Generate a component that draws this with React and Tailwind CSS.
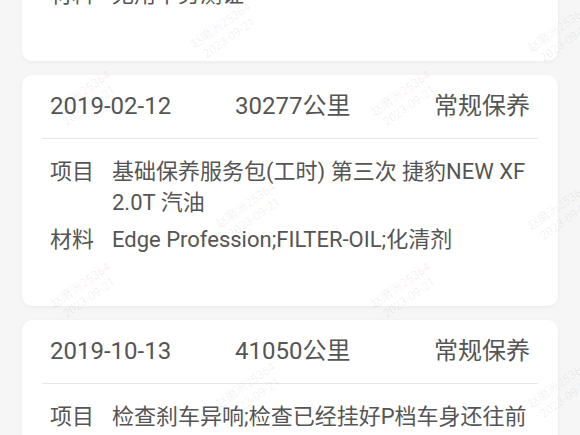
import React from "react";

const marks = [
  { x: 225, y: 32 },
  { x: 562, y: 36 },
  { x: 85, y: 100 },
  { x: 405, y: 100 },
  { x: 250, y: 212 },
  { x: 562, y: 214 },
  { x: 85, y: 292 },
  { x: 405, y: 292 },
  { x: 250, y: 392 },
  { x: 562, y: 392 },
];

function Row({ label, children }) {
  return (
    <div className="flex pl-[8px] text-[22px] leading-[31px]">
      <div className="w-[62px] shrink-0">{label}</div>
      <div className="flex-1 min-w-0">{children}</div>
    </div>
  );
}

function Card({ date, km, type, items }) {
  return (
    <div className="bg-white rounded-[10px] px-[20px] pb-[51px] shadow-[0_1px_4px_rgba(0,0,0,0.05)]">
      <div className="flex items-center px-[8px] pt-[15px] pb-[16px] text-[24px] leading-[32px]">
        <div className="w-[185px] shrink-0">{date}</div>
        <div className="flex-1">{km}</div>
        <div>{type}</div>
      </div>
      <div className="h-px bg-[#e6e6e6]" />
      <div className="pt-[17px] flex flex-col gap-[6px]">
        {items.map((it) => (
          <Row key={it[0]} label={it[0]}>
            {it[1]}
          </Row>
        ))}
      </div>
    </div>
  );
}

export default function App() {
  return (
    <div className="relative w-[580px] h-[435px] overflow-hidden bg-[#f6f6f6] text-[#555555] font-['Roboto','Noto_Sans_CJK_SC',sans-serif]">
      <div className="flex flex-col gap-[14px] px-[22px]">
        <div className="-mt-[21px] bg-white rounded-b-[10px] px-[20px] pb-[51px] shadow-[0_1px_4px_rgba(0,0,0,0.05)]">
          <Row label="材料">无用中劳测证</Row>
        </div>
        <Card
          date="2019-02-12"
          km="30277公里"
          type="常规保养"
          items={[
            ["项目", "基础保养服务包(工时) 第三次 捷豹NEW XF 2.0T 汽油"],
            ["材料", "Edge Profession;FILTER-OIL;化清剂"],
          ]}
        />
        <Card
          date="2019-10-13"
          km="41050公里"
          type="常规保养"
          items={[
            ["项目", "检查刹车异响;检查已经挂好P档车身还往前溜"],
            ["材料", "无"],
          ]}
        />
      </div>
      <div className="pointer-events-none absolute inset-0" aria-hidden="true">
        {marks.map((m, i) => (
          <div
            key={i}
            className="absolute text-center text-[12px] leading-[15px] text-[rgba(0,0,0,0.07)] -rotate-[35deg] -translate-x-1/2 -translate-y-1/2 whitespace-pre"
            style={{ left: m.x, top: m.y }}
          >
            {"赵磨洲25364\n2023-09-21"}
          </div>
        ))}
      </div>
    </div>
  );
}
